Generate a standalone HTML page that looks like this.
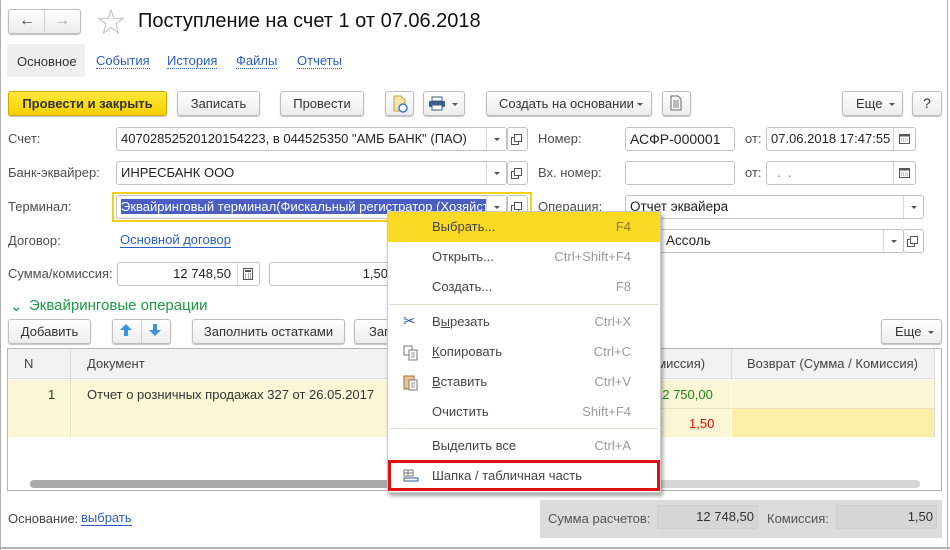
<!DOCTYPE html>
<html><head><meta charset="utf-8">
<style>
*{box-sizing:border-box;margin:0;padding:0}
body{width:950px;height:550px;background:#fff;font-family:"Liberation Sans",Arial,sans-serif;font-size:13px;color:#333;position:relative;overflow:hidden}
.a{position:absolute}
.btn{position:absolute;border:1px solid #bdbdbd;border-radius:3px;background:linear-gradient(#fff,#ececec);box-shadow:0 1px 1px rgba(0,0,0,.25);text-align:center;color:#333;font-size:13px}
.fld{position:absolute;border:1px solid #c2c2c2;border-radius:3px;background:#fff;font-size:13px;color:#222;white-space:nowrap;overflow:hidden}
.lbl{position:absolute;color:#4d4d4d;font-size:13px}
.lnk{position:absolute;color:#2c5cc5;font-size:13px;border-bottom:1px dotted #2c5cc5;line-height:14px}
.dd{position:absolute;top:0;bottom:0;width:20px;border-left:1px solid #d6d6d6}
.dd:after{content:"";position:absolute;left:7px;top:10px;border:3px solid transparent;border-top:3px solid #555}
.ob{position:absolute;border:1px solid #c2c2c2;border-radius:3px;background:#fff}
.ob:after{content:"";position:absolute;left:6px;top:6px;width:6px;height:6px;border:1px solid #555;box-shadow:-3px 3px 0 -1px #fff,-3px 3px 0 0 #555}
.mi{position:absolute;left:0;width:272px;height:30px;line-height:30px;font-size:13px;color:#444}
.mi .t{position:absolute;left:44px}
.mi .s{position:absolute;right:29px;color:#9a9a9a}
.sep{position:absolute;left:2px;width:268px;height:1px;background:#e0dccb}
</style></head><body>
<div class="a" style="left:0;top:0;width:1px;height:550px;background:#b0b0b0"></div>
<div class="a" style="left:947px;top:0;width:1px;height:550px;background:#b0b0b0"></div>
<div class="a" style="left:0;top:547px;width:950px;height:2px;background:#b0b0b0"></div>

<div class="btn" style="left:8px;top:9px;width:73px;height:25px"></div>
<div class="a" style="left:44px;top:11px;width:1px;height:21px;background:#ccc"></div>
<div class="a" style="left:19px;top:12px;font-size:16px;color:#444;font-weight:bold">&#8592;</div>
<div class="a" style="left:54px;top:12px;font-size:16px;color:#aaa;font-weight:bold">&#8594;</div>
<svg class="a" style="left:98px;top:9px" width="26" height="25" viewBox="0 0 26 25"><polygon points="13,1 16,9.5 25,9.5 18,15 20.5,24 13,18.5 5.5,24 8,15 1,9.5 10,9.5" fill="none" stroke="#c8c8c8" stroke-width="1.2"/></svg>
<div class="a" style="left:138px;top:10px;font-size:20px;color:#111">Поступление на счет 1 от 07.06.2018</div>

<div class="a" style="left:7px;top:44px;width:78px;height:33px;background:#efefef;border-radius:3px"></div>
<div class="a" style="left:17px;top:54px;color:#333">Основное</div>
<div class="lnk" style="left:96px;top:54px">События</div>
<div class="lnk" style="left:167px;top:54px">История</div>
<div class="lnk" style="left:236px;top:54px">Файлы</div>
<div class="lnk" style="left:297px;top:54px">Отчеты</div>

<div class="btn" style="left:8px;top:91px;width:159px;height:25px;background:linear-gradient(#ffe838,#f5cf00);border-color:#c9a800;font-weight:bold;line-height:23px;color:#333">Провести и закрыть</div>
<div class="btn" style="left:177px;top:91px;width:83px;height:25px;line-height:23px">Записать</div>
<div class="btn" style="left:280px;top:91px;width:84px;height:25px;line-height:23px">Провести</div>
<div class="btn" style="left:385px;top:91px;width:29px;height:25px"></div>
<svg class="a" style="left:391px;top:95px" width="18" height="18"><path d="M3 1h7l4 4v11H3z" fill="#f4e3a8" stroke="#c9a24a"/><circle cx="12" cy="13" r="4" fill="#fff" stroke="#3a7bd5" stroke-width="1.5"/></svg>
<div class="btn" style="left:423px;top:91px;width:42px;height:25px"></div>
<svg class="a" style="left:428px;top:96px" width="18" height="15"><rect x="4" y="1" width="10" height="4" fill="#fff" stroke="#3b5f86"/><rect x="1" y="5" width="16" height="6" rx="1" fill="#3b5f86"/><rect x="4" y="9" width="10" height="5" fill="#fff" stroke="#3b5f86"/></svg>
<div class="a" style="left:452px;top:103px;border:3px solid transparent;border-top:3px solid #555"></div>
<div class="btn" style="left:486px;top:91px;width:166px;height:25px;line-height:23px;text-align:left;padding-left:12px">Создать на основании</div>
<div class="a" style="left:637px;top:103px;border:3px solid transparent;border-top:3px solid #555"></div>
<div class="btn" style="left:662px;top:91px;width:29px;height:25px"></div>
<svg class="a" style="left:669px;top:95px" width="14" height="16"><path d="M2 1h7l3 3v11H2z" fill="#fff" stroke="#666"/><path d="M4 6h6M4 8h6M4 10h6M4 12h6" stroke="#777"/></svg>
<div class="btn" style="left:842px;top:91px;width:61px;height:25px;line-height:23px;text-align:left;padding-left:13px">Еще</div>
<div class="a" style="left:889px;top:103px;border:3px solid transparent;border-top:3px solid #555"></div>
<div class="btn" style="left:912px;top:91px;width:30px;height:25px;line-height:23px;font-size:14px">?</div>

<div class="lbl" style="left:8px;top:131px">Счет:</div>
<div class="fld" style="left:116px;top:127px;width:391px;height:24px;line-height:22px;padding-left:4px">40702852520120154223, в 044525350 "АМБ БАНК" (ПАО)<div class="dd" style="right:0"></div></div>
<div class="ob" style="left:507px;top:127px;width:21px;height:24px"></div>
<div class="lbl" style="left:538px;top:131px">Номер:</div>
<div class="fld" style="left:625px;top:127px;width:110px;height:24px;line-height:22px;padding-left:4px;font-size:14px">АСФР-000001</div>
<div class="lbl" style="left:745px;top:131px">от:</div>
<div class="fld" style="left:766px;top:127px;width:150px;height:24px;line-height:22px;padding-left:4px;font-size:13px">07.06.2018 17:47:55<div class="a" style="right:0;top:0;width:22px;height:22px;border-left:1px solid #d6d6d6;background:#fff"></div></div>
<svg class="a" style="left:899px;top:133px" width="11" height="11"><rect x=".5" y="1.5" width="10" height="9" fill="none" stroke="#555"/><rect x=".5" y="1.5" width="10" height="2" fill="#555"/><path d="M2 6h7M2 8h7" stroke="#888" stroke-dasharray="1 1"/></svg>

<div class="lbl" style="left:8px;top:165px">Банк-эквайрер:</div>
<div class="fld" style="left:116px;top:161px;width:391px;height:24px;line-height:22px;padding-left:4px">ИНРЕСБАНК ООО<div class="dd" style="right:0"></div></div>
<div class="ob" style="left:507px;top:161px;width:21px;height:24px"></div>
<div class="lbl" style="left:538px;top:165px">Вх. номер:</div>
<div class="fld" style="left:625px;top:161px;width:110px;height:24px"></div>
<div class="lbl" style="left:745px;top:165px">от:</div>
<div class="fld" style="left:766px;top:161px;width:150px;height:24px;line-height:22px;padding-left:10px;color:#777">. &nbsp;.<div class="a" style="right:0;top:0;width:22px;height:22px;border-left:1px solid #d6d6d6"></div></div>
<svg class="a" style="left:899px;top:167px" width="11" height="11"><rect x=".5" y="1.5" width="10" height="9" fill="none" stroke="#555"/><rect x=".5" y="1.5" width="10" height="2" fill="#555"/><path d="M2 6h7M2 8h7" stroke="#888" stroke-dasharray="1 1"/></svg>

<div class="lbl" style="left:8px;top:199px">Терминал:</div>
<div class="a" style="left:112px;top:192px;width:420px;height:30px;border:2px solid #f5cf1c"></div>
<div class="fld" style="left:116px;top:195px;width:391px;height:24px;line-height:22px;padding-left:4px"><span style="background:#4a5fc1;color:#fff">Эквайринговый терминал(Фискальный регистратор (Хозяйст</span><div class="dd" style="right:0;background:#fff"></div></div>
<div class="ob" style="left:507px;top:195px;width:21px;height:24px"></div>
<div class="lbl" style="left:538px;top:199px">Операция:</div>
<div class="fld" style="left:625px;top:195px;width:299px;height:24px;line-height:22px;padding-left:4px;font-size:13.5px">Отчет эквайера<div class="dd" style="right:0"></div></div>

<div class="lbl" style="left:8px;top:233px">Договор:</div>
<div class="a" style="left:120px;top:233px;color:#2c5cc5;border-bottom:1px solid #2c5cc5;line-height:14px">Основной договор</div>
<div class="fld" style="left:625px;top:229px;width:279px;height:24px;line-height:22px;padding-left:40px;font-size:13.5px">Ассоль<div class="dd" style="right:0"></div></div>
<div class="ob" style="left:903px;top:229px;width:21px;height:24px"></div>

<div class="lbl" style="left:8px;top:266px">Сумма/комиссия:</div>
<div class="fld" style="left:117px;top:262px;width:143px;height:24px;line-height:22px;text-align:right;padding-right:28px">12 748,50<div class="a" style="right:0;top:0;width:22px;height:22px;border-left:1px solid #d6d6d6"></div></div>
<svg class="a" style="left:243px;top:268px" width="10" height="12"><rect x=".5" y=".5" width="9" height="11" fill="none" stroke="#555"/><rect x="2" y="2" width="6" height="2" fill="#555"/><path d="M2 6h1M5 6h1M2 8h1M5 8h1M2 10h1M5 10h1M7 6h1M7 8h1M7 10h1" stroke="#555"/></svg>
<div class="fld" style="left:269px;top:262px;width:130px;height:24px;line-height:22px;text-align:right;padding-right:10px">1,50</div>

<div class="a" style="left:10px;top:297px;color:#1a9b45;font-size:15px">&#8964;</div>
<div class="a" style="left:29px;top:297px;color:#1a9b45;font-size:15px">Эквайринговые операции</div>
<div class="btn" style="left:8px;top:319px;width:83px;height:25px;line-height:23px">Добавить</div>
<div class="btn" style="left:112px;top:319px;width:59px;height:25px"></div>
<div class="a" style="left:141px;top:320px;width:1px;height:23px;background:#ccc"></div>
<svg class="a" style="left:119px;top:323px" width="14" height="14"><path d="M7 1L1 7h4v6h4V7h4z" fill="#3a93dd"/></svg>
<svg class="a" style="left:148px;top:323px" width="14" height="14"><path d="M7 13L1 7h4V1h4v6h4z" fill="#3a93dd"/></svg>
<div class="btn" style="left:192px;top:319px;width:153px;height:25px;line-height:23px">Заполнить остатками</div>
<div class="btn" style="left:354px;top:319px;width:60px;height:25px;line-height:23px;text-align:left;padding-left:14px">Заполнить</div>
<div class="btn" style="left:881px;top:319px;width:61px;height:25px;line-height:23px;text-align:left;padding-left:13px">Еще</div>
<div class="a" style="left:928px;top:331px;border:3px solid transparent;border-top:3px solid #555"></div>

<div class="a" style="left:7px;top:348px;width:935px;height:143px;border:1px solid #b5b5b5;background:#fff"></div>
<div class="a" style="left:8px;top:349px;width:927px;height:30px;background:#f2f2f2;border-bottom:1px solid #ddd"></div>
<div class="a" style="left:70px;top:349px;width:1px;height:88px;background:#ddd"></div>
<div class="a" style="left:731px;top:349px;width:1px;height:88px;background:#ddd"></div>
<div class="a" style="left:934px;top:349px;width:1px;height:88px;background:#ddd"></div>
<div class="a" style="left:24px;top:356px;color:#444">N</div>
<div class="a" style="left:87px;top:356px;color:#444">Документ</div>
<div class="a" style="left:650px;top:356px;color:#444">омиссия)</div>
<div class="a" style="left:747px;top:356px;color:#444">Возврат (Сумма / Комиссия)</div>
<div class="a" style="left:8px;top:380px;width:926px;height:57px;background:#fbf6d5"></div>
<div class="a" style="left:70px;top:380px;width:1px;height:57px;background:#e8e2c2"></div>
<div class="a" style="left:731px;top:380px;width:1px;height:57px;background:#fff"></div>
<div class="a" style="left:732px;top:409px;width:202px;height:28px;background:#fbeea6"></div>
<div class="a" style="left:640px;top:408px;width:294px;height:1px;background:#e8e2c2"></div>
<div class="a" style="left:48px;top:387px;color:#333">1</div>
<div class="a" style="left:87px;top:387px;color:#333">Отчет о розничных продажах 327 от 26.05.2017</div>
<div class="a" style="left:655px;top:387px;color:#1a8a1a">12 750,00</div>
<div class="a" style="left:689px;top:416px;color:#e00">1,50</div>
<div class="a" style="left:30px;top:480px;width:890px;height:8px;border-radius:4px;background:#d6d6d6"></div>
<div class="a" style="left:30px;top:480px;width:360px;height:8px;border-radius:4px;background:#a9a9a9"></div>

<div class="a" style="left:8px;top:511px;color:#444">Основание:</div>
<div class="a" style="left:81px;top:511px;color:#2c5cc5;border-bottom:1px solid #2c5cc5;line-height:14px">выбрать</div>
<div class="a" style="left:540px;top:500px;width:402px;height:38px;background:#dcdcdc"></div>
<div class="a" style="left:548px;top:511px;color:#555">Сумма расчетов:</div>
<div class="a" style="left:657px;top:505px;width:101px;height:24px;background:#d6d6d6;border:1px solid #cfcfcf;border-radius:2px;text-align:right;padding-right:3px;line-height:22px;color:#333">12 748,50</div>
<div class="a" style="left:767px;top:511px;color:#555">Комиссия:</div>
<div class="a" style="left:836px;top:505px;width:101px;height:24px;background:#d6d6d6;border:1px solid #cfcfcf;border-radius:2px;text-align:right;padding-right:3px;line-height:22px;color:#333">1,50</div>

<div class="a" style="left:387px;top:211px;width:274px;height:282px;background:#fff;border:1px solid #c8c8c8;box-shadow:2px 3px 4px rgba(0,0,0,.35)">
<div class="mi" style="top:0;background:#f9d923"><span class="t">Выбрать...</span><span class="s" style="color:#8a7a30">F4</span></div>
<div class="mi" style="top:30px"><span class="t">Открыть...</span><span class="s">Ctrl+Shift+F4</span></div>
<div class="mi" style="top:60px"><span class="t">Создать...</span><span class="s">F8</span></div>
<div class="sep" style="top:92px"></div>
<div class="mi" style="top:95px"><span class="a" style="left:15px;color:#2c5c9c;font-size:15px">&#9986;</span><span class="t">В<u>ы</u>резать</span><span class="s">Ctrl+X</span></div>
<div class="mi" style="top:125px"><svg class="a" style="left:15px;top:8px" width="16" height="16"><rect x="1" y="1" width="8" height="9" fill="#fff" stroke="#777"/><rect x="6" y="5" width="8" height="10" fill="#fff" stroke="#777"/><path d="M8 8h4M8 10h4M8 12h4" stroke="#999"/></svg><span class="t"><u>К</u>опировать</span><span class="s">Ctrl+C</span></div>
<div class="mi" style="top:155px"><svg class="a" style="left:15px;top:7px" width="16" height="17"><rect x="1" y="2" width="10" height="13" fill="#e7c69a" stroke="#a06a2a"/><rect x="6" y="6" width="8" height="10" fill="#fff" stroke="#777"/><path d="M8 9h4M8 11h4M8 13h4" stroke="#999"/></svg><span class="t"><u>В</u>ставить</span><span class="s">Ctrl+V</span></div>
<div class="mi" style="top:185px"><span class="t">Очистить</span><span class="s">Shift+F4</span></div>
<div class="sep" style="top:216px"></div>
<div class="mi" style="top:219px"><span class="t">Выделить все</span><span class="s">Ctrl+A</span></div>
<div class="mi" style="top:249px"><svg class="a" style="left:15px;top:8px" width="16" height="14"><rect x="1" y="1" width="9" height="6" fill="#fff" stroke="#777"/><path d="M5 1v6M1 4h9" stroke="#777"/><rect x="1" y="9" width="14" height="3" fill="#fff" stroke="#2c5c9c"/></svg><span class="t">Шапка / табличная часть</span></div>
<div class="a" style="left:0;top:248px;width:272px;height:31px;border:3px solid #e21010"></div>
</div>
</body></html>
